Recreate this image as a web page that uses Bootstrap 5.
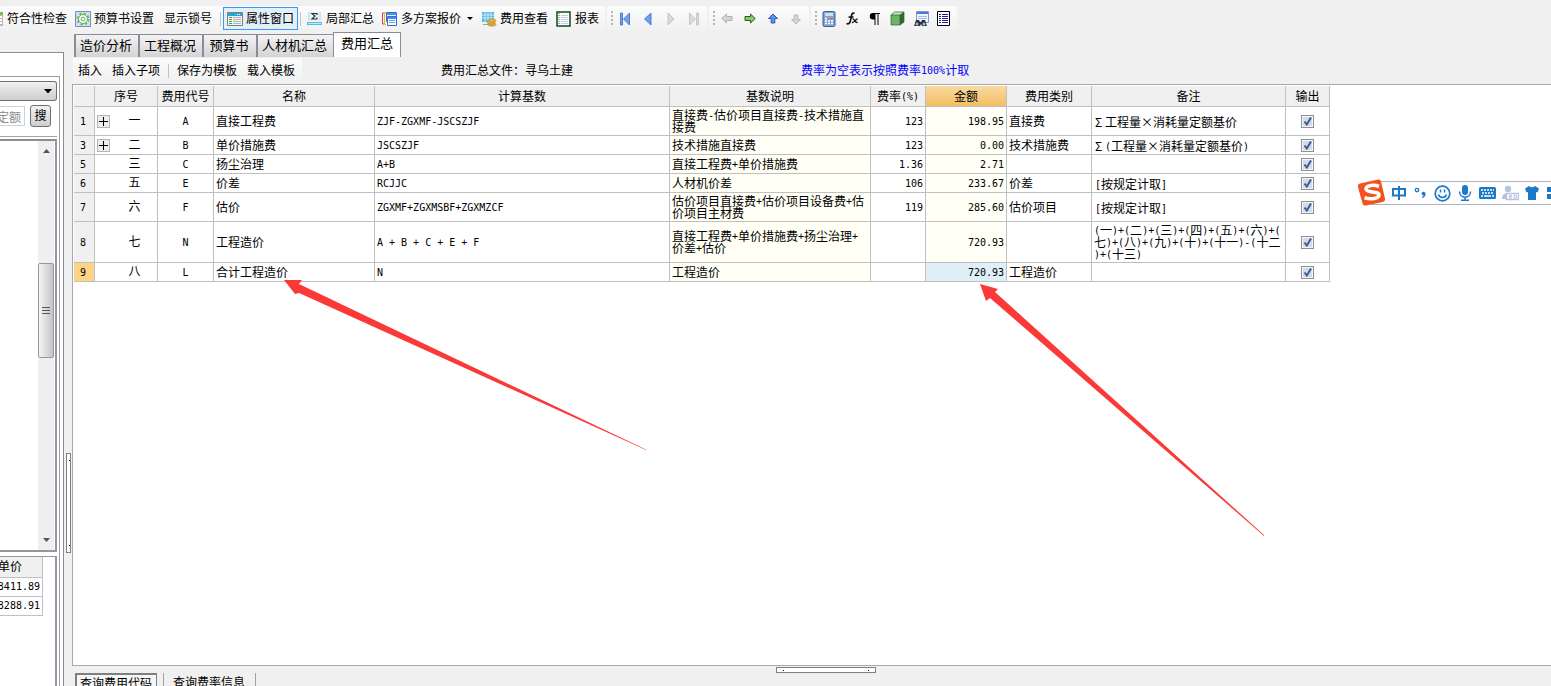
<!DOCTYPE html>
<html lang="zh-CN">
<head>
<meta charset="utf-8">
<meta name="viewport" content="width=device-width, initial-scale=1">
<title>费用汇总</title>
<link href="https://cdn.jsdelivr.net/npm/bootstrap@5.3.0/dist/css/bootstrap.min.css" rel="stylesheet">
<style>
body{background:#f0f0f0;color:#000;font-family:"Liberation Sans","Noto Sans CJK SC",sans-serif;font-size:12px;line-height:16px}
button,input,select{font:inherit;color:inherit}
.hw{font-family:"DejaVu Sans Mono",monospace;font-size:10px;line-height:0;vertical-align:1px}
/* toolbar */
.tool-row{padding-top:6px;height:32px;gap:2px;flex:none}
.tool-group{height:25px;background:linear-gradient(#fcfcfc,#f1f1f1);border-radius:3px;padding-right:2px}
.tool-group.with-grip{padding-left:4px}
.grip{width:2px;height:15px;flex:none;background:repeating-linear-gradient(#b4b4b4 0 2px,transparent 2px 4px)}
.tool{border:1px solid transparent;background:none;height:23px;padding:0 3px;gap:3px;white-space:nowrap}
.tool.cut{border-left:0;padding-left:0;gap:4px}
.tool.plain{margin:0 2px}
.tool.on{border-color:#3399ff;background:#e4effa}
.tool.ico{width:23px;padding:0;border:0}
.bar-sep{width:1px;height:14px;background:#c3c3c3;margin:0 2px;flex:none}
svg{display:block;flex:none}
/* left panel */
.side{width:64px;margin-top:20px;border:solid #8c8c94;border-width:1px 1px 0 0;background:#fff;padding-top:23px;flex:none}
.side-in{margin-right:3px;border:solid #9c9ca4;border-width:1px 1px 0 0;padding-right:2px}
.combo{-webkit-appearance:none;appearance:none;height:20px;margin-top:4px;border:1px solid #707070;border-left:0;border-radius:0 3px 3px 0;background:linear-gradient(#f2f2f2,#ddd 50%,#cfcfcf)}
.combo-box{position:relative}
.combo-box svg{position:absolute;right:5px;top:12px;pointer-events:none}
.find-row{padding:4px 0 9px}
.find-in{width:25px;height:20px;border:1px solid #cdd2d8;border-left:0;padding:0 3px 0 0;color:#8a8a8a;background:#fff;text-align:right;direction:rtl}
.find-btn{width:21px;height:22px;border:1px solid #707070;border-radius:3px;background:linear-gradient(#f2f2f2,#cfcfcf);padding:0;margin-left:5px}
.tree-box{border:solid #96969c;border-width:2px 2px 2px 0;border-top-color:#8c8c94;height:413px;flex:none;padding-right:1px}
.rule{border-top:1px solid #a4a4a4;height:3px}
.sbar{width:16px;background:#efefef}
.thumb{height:95px;margin-top:110px;border:1px solid #979797;border-radius:2px;background:linear-gradient(90deg,#f5f5f5,#dcdcdc 50%,#c4c4c8);display:flex;align-items:center;justify-content:center}
.price-box{border:solid #96969c;border-width:1px 2px 0 0;margin-top:4px}
.price{width:47px;margin-left:-4px;border-collapse:separate;border-spacing:0;line-height:16px}
.price th,.price td{font-weight:400;border:solid #c0c0c0;border-width:0 1px 1px 0;height:19px;padding:0 2px 0 0;text-align:right;white-space:nowrap}
.price th{height:21px;background:#f0f0f0;text-align:left;padding-left:2px}
.price-box,.clip{overflow:hidden}
.split-v{width:8px;flex:none}
.handle{border:1px solid #808080;background:#fff}
.split-v .handle{width:5px;height:100px;margin:auto 1px 133px auto}
/* tabs */
.tabs{padding-left:2px;height:25px}
.tab-b{border:solid #8c8c98;border-width:1px 0 0 2px;background:linear-gradient(#f3f3f3,#d4d4d4);height:23px;min-width:54px;font-size:13px;line-height:22px;padding:0 6px 0 4px;white-space:nowrap}
.tab-b.on{height:25px;background:#fff;border-width:1px 1px 0 1px;padding:0 7px 2px}
.sub-row{height:27px}
.sub-left{width:229px;height:25px;background:linear-gradient(#fbfbfb,#f1f1f1);margin-left:1px}
.sub-left .bar-sep{margin:0 3px}
.sub-btn{border:0;background:none;padding:0 5px;white-space:nowrap}
.file-note{margin-left:139px}
.rate-note{margin-left:228px;color:#0000ff}
/* grid */
.sheet{background:#fff;border:solid #a7a7ad;border-width:1px 0 1px 1px;padding:1px 0 0 1px;min-height:0}
.cost{width:1256px;table-layout:fixed;border-collapse:separate;border-spacing:0;line-height:12px}
.cost th,.cost td{border:solid #c0c0c0;border-width:0 1px 1px 0;padding:3px 2px 1px;height:19px;font-weight:400;vertical-align:middle;word-break:break-all}
.cost thead th{height:21px;background:#f0f0f0;text-align:center;padding:2px 0 0}
.cost tbody th{background:#f0f0f0;text-align:center;padding:2px 2px 0 0}
.cost .hot{background:linear-gradient(#fad9a0,#f2be63)}
.cost .now{background:#ffd289}
.cost .soft{background:#fffff5}
.cost .pick{background:#dfeff7}
.cost .two{height:29px}.cost .three{height:41px}
.cost .memo{padding-left:3px;font-family:"Noto Sans CJK SC",sans-serif}
.cost .box-cell{padding:2px 2px}
.cost .order{padding:2px 0 2px 2px}
.knob,.knob-gap{width:13px;height:13px;flex:none;padding:0;margin-right:2px}
.knob{border:1px solid #b4b4b4;background:#eee;display:flex;align-items:center;justify-content:center}
.tick{-webkit-appearance:none;appearance:none;display:block;margin:auto;width:13px;height:13px;border:1px solid #8e8f8f;background:#e4e7ec}
.tick:checked{background:url("data:image/svg+xml,%3Csvg xmlns='http://www.w3.org/2000/svg' viewBox='0 0 11 11'%3E%3Crect x='1' y='1' width='9' height='9' fill='%23d5dbe5'/%3E%3Cpath d='M2.500 5.500 4.800 8.500 9 1.500' fill='none' stroke='%233a5c9e' stroke-width='2'/%3E%3C/svg%3E") #f7f7f7}
.foot{height:20px}
.split-h .handle{width:100px;height:6px;margin-left:29px;margin-top:1px;background:linear-gradient(#00008b,#00008b) 6px 2px/1px 1px no-repeat,linear-gradient(#00008b,#00008b) 91px 2px/1px 1px no-repeat,#fff}
.split-v .handle{background:linear-gradient(#00008b,#00008b) 2px 6px/1px 1px no-repeat,linear-gradient(#00008b,#00008b) 2px 91px/1px 1px no-repeat,#fff}
.foot-tabs{padding-left:3px;gap:6px}
.foot-b{border:0;border-right:1px solid #a0a0a0;background:none;height:24px;padding:0 10px 0 9px;white-space:nowrap;line-height:20px}
.foot-b.on{border:solid #808080;border-width:2px 1px 0 2px;background:#f7f7f7;padding:0 4px 0 3px;line-height:18px}
.foot-b{display:flex;align-items:flex-start}
.split-l{border-left:1px solid #a0a0a0}
.marks{position:absolute;left:0;top:0;pointer-events:none}
.ime{position:absolute;right:0;top:181px;width:180px;height:24px;border:solid #b0b3c2;border-width:1px 0;background:#fff}
.ime-logo{position:absolute;left:-14px;top:-4px}
.ime-items{padding-left:20px;gap:6px;height:22px}
.min-h-0{min-height:0}
.min-w-0{min-width:0}
</style>
</head>
<body class="vh-100 overflow-hidden d-flex flex-column position-relative">

<header class="tool-row d-flex align-items-start" role="toolbar" aria-label="工具栏">
  <div class="tool-group d-flex align-items-center">
    <button class="tool cut d-flex align-items-center"><svg width="3" height="16"><path d="M0 1h3v3H0z" fill="#7cc142"/><path d="M0 4h3v11H0z" fill="#b9b9b9"/><path d="M0 5h2v2H0zm0 3h2v2H0zm0 3h2v2H0z" fill="#fff"/></svg>符合性检查</button>
    <button class="tool d-flex align-items-center"><svg width="16" height="16" viewBox="0 0 16 16"><path d="M.5.5h15v15H.5z" fill="#cfe0f0" stroke="#6f93bd"/><circle cx="8" cy="8" r="5.500" fill="#f3fbf0" stroke="#6aae5a" stroke-width="1.800" stroke-dasharray="2.400 1.900"/><circle cx="8" cy="8" r="4.500" fill="#f4fbf2" stroke="#6aae5a"/><circle cx="8" cy="8" r="1.800" fill="#fff" stroke="#6aae5a"/></svg>预算书设置</button>
    <button class="tool plain d-flex align-items-center">显示锁号</button>
    <span class="bar-sep"></span>
    <button class="tool on d-flex align-items-center"><svg width="16" height="16" viewBox="0 0 16 16"><path d="M.5 1.500h15v13H.5z" fill="#f4f4f4" stroke="#77808a"/><path d="M1 2h14v3H1z" fill="#27aacd"/><path d="M10 3h1v1h-1zm2 0h1v1h-1z" fill="#fff"/><path d="M2 6.500h3M2 8.500h3M2 10.500h3M2 12.500h3" stroke="#3f9e57"/><path d="M6 6.500h8M6 8.500h8M6 10.500h8M6 12.500h8" stroke="#b5b5b5"/></svg>属性窗口</button>
    <span class="bar-sep"></span>
    <button class="tool d-flex align-items-center"><svg width="16" height="16" viewBox="0 0 16 16"><path d="M1 1h13v9H1z" fill="#c9e8f3"/><path d="M3 1h9v9H3z" fill="#e9f4f8"/><path d="M10 4V2.500H5L8 5 5 8h5V6.500" fill="none" stroke="#333" stroke-width="1.200"/><path d="M0 11h15v3H0z" fill="#59bede"/><path d="M1 12h13v1H1z" fill="#bfeaf7"/></svg>局部汇总</button>
    <button class="tool d-flex align-items-center"><svg width="16" height="16" viewBox="0 0 16 16"><path d="M2 2H.5v11H2" fill="none" stroke="#e33b2e"/><path d="M4 1.500H2.500v12H4" fill="none" stroke="#f2b21f"/><path d="M4.500 1.500h10v9h-10z" fill="#e6f1ff" stroke="#2f6fd6"/><path d="M5 2h9v2H5z" fill="#4a8cec"/><path d="M5.500 5.500h9v9h-9z" fill="#fff" stroke="#2f6fd6"/><path d="M7 9.500h6M7 11.500h6" stroke="#6e9fe6"/><path d="M6 6h8v2H6z" fill="#4a8cec"/></svg>多方案报价<svg width="9" height="4" viewBox="0 0 9 4"><path d="M3 0h6L6 3z"/></svg></button>
    <button class="tool d-flex align-items-center"><svg width="16" height="16" viewBox="0 0 16 16"><path d="M1 1h12v10H1z" fill="#54b6e6"/><path d="M1 4h12M1 7h12M4 1v10M7 1v10M10 1v10" stroke="#c7ecfb"/><path d="M2 13h7v1H2z" fill="#8fa4b3"/><g fill="#e2b64c" stroke="#a47a23" stroke-width=".6"><ellipse cx="11" cy="13.500" rx="4" ry="1.700"/><ellipse cx="10" cy="11.500" rx="4" ry="1.700"/><ellipse cx="11" cy="9.500" rx="4" ry="1.700"/></g></svg>费用查看</button>
    <button class="tool d-flex align-items-center"><svg width="16" height="16" viewBox="0 0 16 16"><path d="M1 1h13v14H1z" fill="#fff" stroke="#0d4f16" stroke-width="1.500"/><path d="M3 2v12" stroke="#555" stroke-dasharray="1 1"/><path d="M5 4.500h7M5 6.500h7M5 8.500h7M5 10.500h7M5 12.500h7" stroke="#c5cce8"/></svg>报表</button>
  </div>
  <div class="tool-group with-grip d-flex align-items-center">
    <span class="grip"></span>
    <button class="tool ico d-flex align-items-center justify-content-center" aria-label="首条"><svg width="12" height="14" viewBox="0 0 12 14"><path d="M1.500 1h2v12h-2zM10.500 1v12L4.500 7z" fill="#6fa3f0" stroke="#3567c4" stroke-width=".8"/></svg></button>
    <button class="tool ico d-flex align-items-center justify-content-center" aria-label="上一条"><svg width="10" height="14" viewBox="0 0 10 14"><path d="M8 1v12L1.500 7z" fill="#6fa3f0" stroke="#3567c4" stroke-width=".8"/></svg></button>
    <button class="tool ico d-flex align-items-center justify-content-center" aria-label="下一条"><svg width="10" height="14" viewBox="0 0 10 14"><path d="M2 1v12l6-6z" fill="#dadada" stroke="#bdbdbd" stroke-width=".8"/></svg></button>
    <button class="tool ico d-flex align-items-center justify-content-center" aria-label="末条"><svg width="12" height="14" viewBox="0 0 12 14"><path d="M8.500 1h2v12h-2zM1.500 1v12l6-6z" fill="#dadada" stroke="#bdbdbd" stroke-width=".8"/></svg></button>
  </div>
  <div class="tool-group with-grip d-flex align-items-center">
    <span class="grip"></span>
    <button class="tool ico d-flex align-items-center justify-content-center" aria-label="左移"><svg width="12" height="12" viewBox="0 0 12 12"><path d="M.8 5.500 5.500 1v2.500H11v4H5.500V10z" fill="#d4d4d4" stroke="#b2b2b2"/></svg></button>
    <button class="tool ico d-flex align-items-center justify-content-center" aria-label="右移"><svg width="12" height="12" viewBox="0 0 12 12"><path d="M11.200 5.500 6.500 1v2.500H1v4h5.500V10z" fill="#8cc66f" stroke="#2f5a1a"/></svg></button>
    <button class="tool ico d-flex align-items-center justify-content-center" aria-label="上移"><svg width="12" height="12" viewBox="0 0 12 12"><path d="M6 1 1.500 5.500h2.700V10h3.600V5.500h2.700z" fill="#5a93ea" stroke="#2858b8"/></svg></button>
    <button class="tool ico d-flex align-items-center justify-content-center" aria-label="下移"><svg width="12" height="12" viewBox="0 0 12 12"><path d="M6 11 1.500 6.500h2.700V2h3.600v4.500h2.700z" fill="#d4d4d4" stroke="#b8b8b8"/></svg></button>
  </div>
  <div class="tool-group with-grip d-flex align-items-center">
    <span class="grip"></span>
    <button class="tool ico d-flex align-items-center justify-content-center" aria-label="计算器"><svg width="14" height="16" viewBox="0 0 14 16"><rect x="1" y=".5" width="12" height="15" rx="1.500" fill="#7ea3d6" stroke="#385c95"/><path d="M3 2h8v3H3z" fill="#cfe0f3"/><path d="M3 7.500h8M3 10h8M3 12.500h8" stroke="#fff" stroke-width="1.500" stroke-dasharray="2 1"/><path d="M6 7.500h2M9 7.500h2" stroke="#e2503e" stroke-width="1.500"/></svg></button>
    <button class="tool ico d-flex align-items-center justify-content-center" aria-label="函数"><svg width="14" height="16" viewBox="0 0 14 16"><path d="M9.500 2.500C7 1 6.500 4 6 7s-1 7-4.500 5.500M3.500 6h5" fill="none" stroke="#111" stroke-width="1.700"/><path d="M7.500 8c2-1 2.500 4 5 3.500M12.500 8c-2 0-3 4-5.500 3.500" fill="none" stroke="#111" stroke-width="1.400"/></svg></button>
    <button class="tool ico d-flex align-items-center justify-content-center" aria-label="段落"><svg width="12" height="14" viewBox="0 0 12 14"><path d="M11 1H4a3 3 0 0 0 0 6.500h1.500V13h1V2h2v11h1V2H11z"/></svg></button>
    <button class="tool ico d-flex align-items-center justify-content-center" aria-label="立方体"><svg width="15" height="15" viewBox="0 0 15 15"><path d="M1 4h9v10H1z" fill="#6ab56a"/><path d="M1 4l3.500-3H14l-4 3z" fill="#c5e8c0"/><path d="M10 4l4-3v10l-4 3z" fill="#2d6b31"/><path d="M1 4h9v10H1zM1 4l3.500-3H14v10l-4 3M10 4l4-3" fill="none" stroke="#2f5e31" stroke-width=".7"/></svg></button>
    <button class="tool ico d-flex align-items-center justify-content-center" aria-label="查找"><svg width="16" height="16" viewBox="0 0 16 16"><path d="M3.500.5h12v11h-12z" fill="#eef4fd" stroke="#7d9bd0"/><path d="M4 1h11v2H4z" fill="#4d7bd0"/><path d="M5 5.500h9M5 7.500h9" stroke="#a9c0e6"/><path d="M3 9h3l1 2h1l1-2h3l2 6H9l-1-2-1 2H1z" fill="#2c3440"/><circle cx="4" cy="13" r="1.500" fill="#9eb8d0"/><circle cx="11" cy="13" r="1.500" fill="#9eb8d0"/></svg></button>
    <button class="tool ico d-flex align-items-center justify-content-center" aria-label="列表"><svg width="13" height="15" viewBox="0 0 13 15"><path d="M.5.5h12v14H.5z" fill="#fff" stroke="#000"/><path d="M2 3.500h2M2 5.500h2M2 7.500h2M2 9.500h2M2 11.500h2M5 3.500h6M5 5.500h6M5 7.500h6M5 9.500h6M5 11.500h6" stroke="#1a1a9c"/></svg></button>
  </div>
</header>

<div class="d-flex flex-fill min-h-0">
  <aside class="side d-flex flex-column overflow-hidden">
    <div class="side-in d-flex flex-column flex-fill">
      <div class="combo-box d-flex"><select class="combo w-100" aria-label="定额库"><option></option></select><svg width="8" height="5" viewBox="0 0 8 5"><path d="M0 0h8L4 4.500z"/></svg></div>
      <div class="find-row d-flex align-items-center"><input class="find-in" type="text" value="定额" aria-label="定额"><button class="find-btn">搜</button></div>
      <div class="rule"></div>
      <div class="tree-box d-flex justify-content-end">
        <div class="sbar d-flex flex-column">
          <svg class="mx-auto mt-2" width="7" height="4"><path d="M0 4h7L3.500 0z" fill="#555"/></svg>
          <div class="thumb"><svg width="8" height="7"><path d="M0 .5h8M0 3.500h8M0 6.500h8" stroke="#555"/></svg></div>
          <svg class="mx-auto mt-auto mb-2" width="7" height="4"><path d="M0 0h7L3.500 4z" fill="#555"/></svg>
        </div>
      </div>
      <div class="price-box flex-fill">
        <table class="price">
          <thead><tr><th>单价</th></tr></thead>
          <tbody><tr><td><span class="hw">8411.89</span></td></tr><tr><td><span class="hw">8288.91</span></td></tr></tbody>
        </table>
      </div>
    </div>
  </aside>
  <div class="split-v d-flex"><div class="handle"></div></div>

  <main class="flex-fill d-flex flex-column min-w-0">
    <nav class="tabs d-flex align-items-end" role="tablist">
      <button class="tab-b" role="tab">造价分析</button>
      <button class="tab-b" role="tab">工程概况</button>
      <button class="tab-b" role="tab">预算书</button>
      <button class="tab-b" role="tab">人材机汇总</button>
      <button class="tab-b on" role="tab" aria-selected="true">费用汇总</button>
    </nav>
    <div class="sub-row d-flex align-items-center">
      <div class="sub-left d-flex align-items-center">
        <button class="sub-btn">插入</button>
        <button class="sub-btn">插入子项</button>
        <span class="bar-sep"></span>
        <button class="sub-btn">保存为模板</button>
        <button class="sub-btn">载入模板</button>
      </div>
      <span class="file-note text-nowrap">费用汇总文件：寻乌土建</span>
      <span class="rate-note text-nowrap">费率为空表示按照费率<span class="hw">100%</span>计取</span>
    </div>

    <section class="sheet flex-fill overflow-hidden">
      <table class="cost">
        <colgroup><col style="width:21px"><col style="width:63px"><col style="width:56px"><col style="width:161px"><col style="width:295px"><col style="width:201px"><col style="width:55px"><col style="width:81px"><col style="width:85px"><col style="width:194px"><col style="width:44px"></colgroup>
        <thead><tr><th></th><th>序号</th><th>费用代号</th><th>名称</th><th>计算基数</th><th>基数说明</th><th>费率<span class="hw">(%)</span></th><th class="hot">金额</th><th>费用类别</th><th>备注</th><th>输出</th></tr></thead>
        <tbody>
          <tr><th class="two"><span class="hw">1</span></th><td class="order"><div class="d-flex align-items-center"><button class="knob" aria-label="展开"><svg width="9" height="9"><path d="M0 4.500h9M4.500 0v9" stroke="#000"/></svg></button><span class="flex-fill text-center">一</span></div></td><td class="text-center"><span class="hw">A</span></td><td>直接工程费</td><td><span class="hw">ZJF-ZGXMF-JSCSZJF</span></td><td class="soft">直接费<span class="hw">-</span>估价项目直接费<span class="hw">-</span>技术措施直接费</td><td class="text-end"><span class="hw">123</span></td><td class="soft text-end"><span class="hw">198.95</span></td><td>直接费</td><td class="memo">Σ 工程量×消耗量定额基价</td><td class="box-cell"><input class="tick" type="checkbox" checked aria-label="输出 1"></td></tr>
          <tr><th><span class="hw">3</span></th><td class="order"><div class="d-flex align-items-center"><button class="knob" aria-label="展开"><svg width="9" height="9"><path d="M0 4.500h9M4.500 0v9" stroke="#000"/></svg></button><span class="flex-fill text-center">二</span></div></td><td class="text-center"><span class="hw">B</span></td><td>单价措施费</td><td><span class="hw">JSCSZJF</span></td><td class="soft">技术措施直接费</td><td class="text-end"><span class="hw">123</span></td><td class="soft text-end"><span class="hw">0.00</span></td><td>技术措施费</td><td class="memo">Σ <span class="hw">(</span>工程量×消耗量定额基价<span class="hw">)</span></td><td class="box-cell"><input class="tick" type="checkbox" checked aria-label="输出 3"></td></tr>
          <tr><th><span class="hw">5</span></th><td class="order"><div class="d-flex align-items-center"><span class="knob-gap"></span><span class="flex-fill text-center">三</span></div></td><td class="text-center"><span class="hw">C</span></td><td>扬尘治理</td><td><span class="hw">A+B</span></td><td class="soft">直接工程费<span class="hw">+</span>单价措施费</td><td class="text-end"><span class="hw">1.36</span></td><td class="soft text-end"><span class="hw">2.71</span></td><td></td><td></td><td class="box-cell"><input class="tick" type="checkbox" checked aria-label="输出 5"></td></tr>
          <tr><th><span class="hw">6</span></th><td class="order"><div class="d-flex align-items-center"><span class="knob-gap"></span><span class="flex-fill text-center">五</span></div></td><td class="text-center"><span class="hw">E</span></td><td>价差</td><td><span class="hw">RCJJC</span></td><td class="soft">人材机价差</td><td class="text-end"><span class="hw">106</span></td><td class="soft text-end"><span class="hw">233.67</span></td><td>价差</td><td class="memo"><span class="hw">[</span>按规定计取<span class="hw">]</span></td><td class="box-cell"><input class="tick" type="checkbox" checked aria-label="输出 6"></td></tr>
          <tr><th class="two"><span class="hw">7</span></th><td class="order"><div class="d-flex align-items-center"><span class="knob-gap"></span><span class="flex-fill text-center">六</span></div></td><td class="text-center"><span class="hw">F</span></td><td>估价</td><td><span class="hw">ZGXMF+ZGXMSBF+ZGXMZCF</span></td><td class="soft">估价项目直接费<span class="hw">+</span>估价项目设备费<span class="hw">+</span>估价项目主材费</td><td class="text-end"><span class="hw">119</span></td><td class="soft text-end"><span class="hw">285.60</span></td><td>估价项目</td><td class="memo"><span class="hw">[</span>按规定计取<span class="hw">]</span></td><td class="box-cell"><input class="tick" type="checkbox" checked aria-label="输出 7"></td></tr>
          <tr><th class="three"><span class="hw">8</span></th><td class="order"><div class="d-flex align-items-center"><span class="knob-gap"></span><span class="flex-fill text-center">七</span></div></td><td class="text-center"><span class="hw">N</span></td><td>工程造价</td><td><span class="hw">A + B + C + E + F</span></td><td class="soft">直接工程费<span class="hw">+</span>单价措施费<span class="hw">+</span>扬尘治理<span class="hw">+</span><br>价差<span class="hw">+</span>估价</td><td></td><td class="soft text-end"><span class="hw">720.93</span></td><td></td><td><span class="hw">(</span>一<span class="hw">)+(</span>二<span class="hw">)+(</span>三<span class="hw">)+(</span>四<span class="hw">)+(</span>五<span class="hw">)+(</span>六<span class="hw">)+(</span><br>七<span class="hw">)+(</span>八<span class="hw">)+(</span>九<span class="hw">)+(</span>十<span class="hw">)+(</span>十一<span class="hw">)-(</span>十二<br><span class="hw">)+(</span>十三<span class="hw">)</span></td><td class="box-cell"><input class="tick" type="checkbox" checked aria-label="输出 8"></td></tr>
          <tr><th class="now"><span class="hw">9</span></th><td class="order"><div class="d-flex align-items-center"><span class="knob-gap"></span><span class="flex-fill text-center">八</span></div></td><td class="text-center"><span class="hw">L</span></td><td>合计工程造价</td><td><span class="hw">N</span></td><td class="soft">工程造价</td><td></td><td class="pick text-end"><span class="hw">720.93</span></td><td>工程造价</td><td></td><td class="box-cell"><input class="tick" type="checkbox" checked aria-label="输出 9"></td></tr>
        </tbody>
      </table>
    </section>

    <footer class="foot clip">
      <div class="split-h d-flex justify-content-center"><div class="handle"></div></div>
      <div class="foot-tabs d-flex">
        <button class="foot-b on">查询费用代码</button>
        <button class="foot-b split-l">查询费率信息</button>
      </div>
    </footer>
  </main>
</div>

<svg class="marks" width="1270" height="540" viewBox="0 0 1270 540" aria-hidden="true"><g fill="#fb3a38"><path d="M284 280h18l-3 4 348 166h-1l-347-157-4 1z"/><path d="M980 284l18 5-3 3 269 243v1l-274-238-4 3z"/></g></svg>

<div class="ime">
  <svg class="ime-logo" width="29" height="29" viewBox="0 0 29 29"><path d="M3 5.500 21 1.500q2.500-.5 3 2l4 17q.5 3-2.500 3.500L9 27.500q-3 .5-3.500-2L1 9q-.5-3 2-3.500z" fill="#f4511e"/><path d="M22 8.500c-5-2.200-13-1.200-13 2.600 0 4 13 1.600 13 5.900 0 3.600-8 4.600-14.500 2.800" fill="none" stroke="#fff" stroke-width="3.600"/></svg>
  <div class="ime-items d-flex align-items-center">
    <svg width="16" height="16" viewBox="0 0 16 16"><path d="M2 4h12v6.500H2zM8 1v14" fill="none" stroke="#1e78c8" stroke-width="2"/></svg>
    <svg width="15" height="16" viewBox="0 0 15 16"><circle cx="4" cy="5" r="1.700" fill="none" stroke="#1e78c8" stroke-width="1.300"/><path d="M8.500 8.500a2 2 0 1 1 4 .5c0 2-1 3.500-3 4l-.5-1c1-.5 1.500-1 1.600-1.600-1.200 0-2-.8-2.100-1.900z" fill="#1e78c8"/></svg>
    <svg width="17" height="17" viewBox="0 0 17 17"><circle cx="8.500" cy="8.500" r="7.300" fill="none" stroke="#1e78c8" stroke-width="1.700"/><path d="M6.500 4.500v3M10.500 4.500v3M4.500 9.500c1 4 7 4 8 0" fill="none" stroke="#1e78c8" stroke-width="1.500"/></svg>
    <svg width="16" height="16" viewBox="0 0 16 16"><rect x="5" y="0" width="6" height="10" rx="3" fill="#1e78c8"/><path d="M2.500 6.500c0 7.500 11 7.500 11 0M8 12v3M4 15.200h8" fill="none" stroke="#1e78c8" stroke-width="1.500"/></svg>
    <svg width="17" height="12" viewBox="0 0 17 12"><rect width="17" height="12" rx="1.500" fill="#1e78c8"/><path d="M2 3h13M3 6h12" stroke="#fff" stroke-width="1.600" stroke-dasharray="2 1"/><path d="M2 9h2M5 9h7M13 9h2" stroke="#fff" stroke-width="1.400"/></svg>
    <svg width="17" height="16" viewBox="0 0 17 16"><circle cx="6" cy="4" r="3.200" fill="#b7c3dc"/><path d="M0 14c0-4 2-6 6-6l-2 6z" fill="#b7c3dc"/><path d="M4.500 8.500h12v6h-12z" fill="#fff" stroke="#b7c3dc" stroke-width="1.300"/><path d="M7 10.500h2.500v1H7.500v1.500H10M12 10.500h2.500V13H12z" fill="none" stroke="#b7c3dc"/></svg>
    <svg width="14" height="14" viewBox="0 0 14 14"><path d="M4 0q3 2.500 6 0l4 2.500-1.500 4L11 6v8H3V6l-1.500.5L0 2.500z" fill="#1e78c8"/></svg>
    <svg width="7" height="14" viewBox="0 0 7 14"><path d="M2 1h5v5H2zM2 8h5v5H2z" fill="#1e78c8"/></svg>
  </div>
</div>
<script src="https://cdn.jsdelivr.net/npm/bootstrap@5.3.0/dist/js/bootstrap.bundle.min.js"></script>
</body>
</html>
